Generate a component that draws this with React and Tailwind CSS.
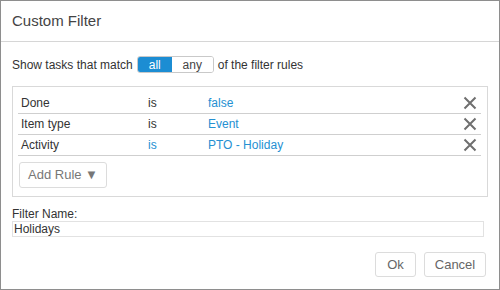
import React from "react";

const rules = [
  { field: "Done", op: "is", value: "false", opLink: false },
  { field: "Item type", op: "is", value: "Event", opLink: false },
  { field: "Activity", op: "is", value: "PTO - Holiday", opLink: true },
];

const CloseIcon = () => (
  <svg width="14" height="14" viewBox="0 0 14 14" className="block">
    <path d="M1.5 1.5 L12.5 12.5 M12.5 1.5 L1.5 12.5" stroke="#6f6f6f" strokeWidth="2" fill="none" />
  </svg>
);

export default function App() {
  return (
    <div
      className="w-[500px] h-[290px] border border-[#8e8e8e] bg-white flex flex-col text-[#333]"
      style={{ fontFamily: "'Liberation Sans', Arial, sans-serif" }}
    >
      <div className="h-[41px] border-b border-[#d6d6d6] px-[11px] flex items-center text-[15px] text-[#444]">
        Custom Filter
      </div>

      <div className="mt-[14px] h-[17px] px-[11px] flex items-center text-[12px]">
        <span>Show tasks that match</span>
        <div className="ml-[4px] flex h-[17px] w-[77px] rounded-[3px] border border-[#c9c9c9] overflow-hidden text-[12px]">
          <div className="w-[34px] bg-[#1c8dd3] text-white flex items-center justify-center">all</div>
          <div className="flex-1 bg-white text-[#444] flex items-center justify-center">any</div>
        </div>
        <span className="ml-[4px]">of the filter rules</span>
      </div>

      <div className="mt-[13px] mx-[11px] h-[111px] border border-[#d9d9d9] pt-[6px] pl-[5px] pr-[6px]">
        {rules.map((r) => (
          <div key={r.field} className="h-[21px] border-b border-[#cfcfcf] flex items-center text-[12px]">
            <span className="w-[130px] pl-[3px]">{r.field}</span>
            <span className={`w-[60px] ${r.opLink ? "text-[#2590d2]" : ""}`}>{r.op}</span>
            <span className="flex-1 text-[#2590d2]">{r.value}</span>
            <span className="mr-[4px]">
              <CloseIcon />
            </span>
          </div>
        ))}
        <button className="mt-[6px] ml-[1px] w-[88px] h-[26px] rounded-[3px] border border-[#dcdcdc] bg-white text-[13px] text-[#777] flex items-center justify-center">
          Add Rule ▼
        </button>
      </div>

      <div className="mt-[10px] px-[11px] text-[12px] leading-[14px]">Filter Name:</div>
      <div className="ml-[11px] mr-[15px] h-[16px] border border-[#e2e2e2] flex items-center pl-[1px] text-[12px]">
        Holidays
      </div>

      <div className="mt-[15px] mr-[13px] flex justify-end gap-[8px]">
        <button className="w-[41px] h-[25px] rounded-[3px] border border-[#dcdcdc] bg-white text-[13px] text-[#666]">
          Ok
        </button>
        <button className="w-[62px] h-[25px] rounded-[3px] border border-[#dcdcdc] bg-white text-[13px] text-[#666]">
          Cancel
        </button>
      </div>
    </div>
  );
}
